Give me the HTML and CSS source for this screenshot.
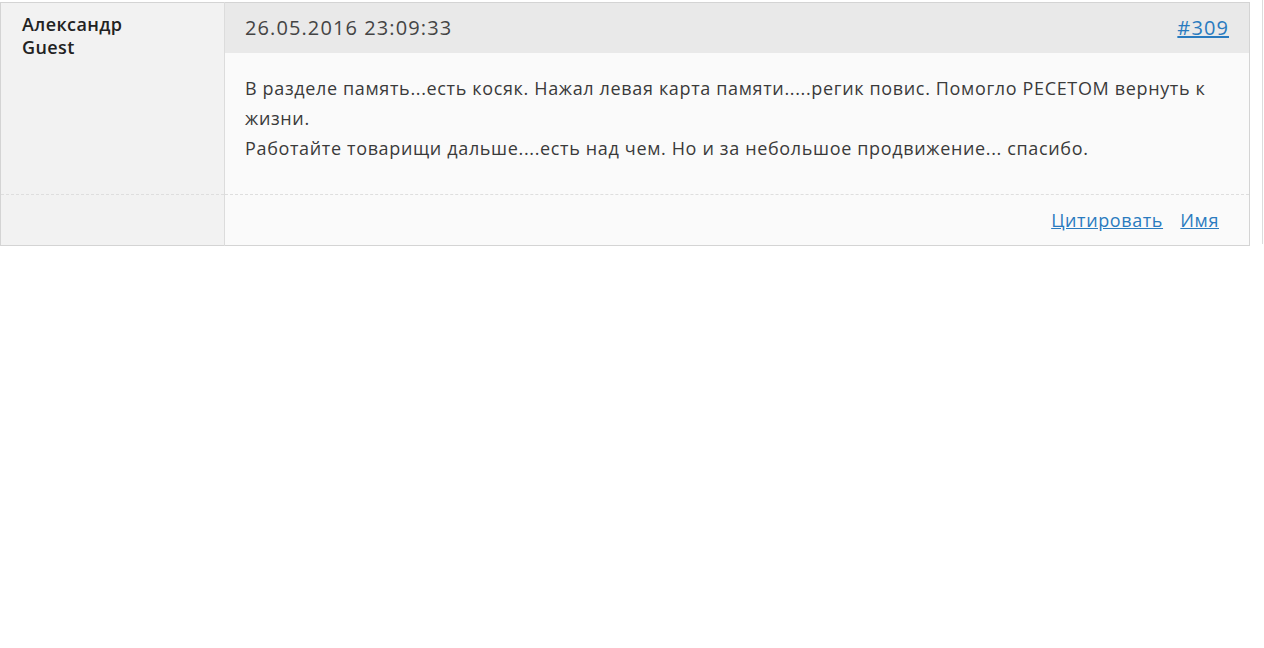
FILE: index.html
```html
<!DOCTYPE html>
<html lang="ru">

<head>
    <meta charset="UTF-8">
    <meta name="viewport" content="width=device-width, initial-scale=1.0">
    <title>Гостевая</title>
    <link rel="stylesheet" href="styles.css">
</head>

<body>

    <div class="page">
        <table class="post">
            <tr class="post-head">
                <td class="author" rowspan="2">
                    <div class="author-name">Александр</div>
                    <div class="author-role">Guest</div>
                </td>
                <td class="post-date">
                    <span>26.05.2016 23:09:33</span>
                    <a href="#" class="post-num">#309</a>
                </td>
            </tr>
            <tr>
                <td class="post-text">
                    В разделе память...есть косяк. Нажал левая карта памяти.....регик повис. Помогло РЕСЕТОМ вернуть к жизни.<br>
                    Работайте товарищи дальше....есть над чем. Но и за небольшое продвижение... спасибо.
                </td>
            </tr>
            <tr class="post-foot">
                <td class="author-foot"></td>
                <td class="actions">
                    <a href="#">Цитировать</a>
                    <a href="#">Имя</a>
                </td>
            </tr>
        </table>
        <div class="edge"></div>
    </div>

</body>

</html>
```

FILE: styles.css
```css
* {
    margin: 0;
    padding: 0;
    box-sizing: border-box;
}

body {
    font-family: "Open Sans", "Noto Sans", sans-serif;
    color: #333;
    background: #fff;
}

.page {
    display: flex;
    align-items: flex-start;
    padding-top: 2px;
}

/* POST */
.post {
    width: 1250px;
    border-collapse: collapse;
    border: 1px solid #d4d4d4;
}

.post td {
    vertical-align: top;
}

.author,
.author-foot {
    width: 224px;
    background: #f2f2f2;
    border-right: 1px solid #dcdcdc;
}

.author {
    padding: 10px 21px 0;
    font-size: 18px;
    font-weight: 600;
    letter-spacing: .4px;
    line-height: 23px;
    color: #222;
}

.post-date {
    height: 50px;
    padding: 0 20px;
    background: #e9e9e9;
    font-size: 20px;
    letter-spacing: 1.1px;
    line-height: 50px;
    color: #444;
}

.post-date span {
    float: left;
}

.post-num {
    float: right;
}

a {
    color: #2a7bbf;
}

.post-text {
    height: 141px;
    padding: 20px 20px 0;
    background: #fafafa;
    font-size: 18px;
    letter-spacing: .65px;
    line-height: 30px;
    color: #3a3a3a;
}

.post-foot td {
    height: 50px;
    border-top: 1px dashed #dedede;
}

.actions {
    background: #fafafa;
    padding: 0 30px;
    text-align: right;
    font-size: 18px;
    letter-spacing: .6px;
    line-height: 50px;
}

.actions a {
    margin-left: 12px;
}

.edge {
    width: 1px;
    height: 244px;
    margin-top: -2px;
    margin-left: 12px;
    background: #dcdcdc;
}

/* POST */
```
